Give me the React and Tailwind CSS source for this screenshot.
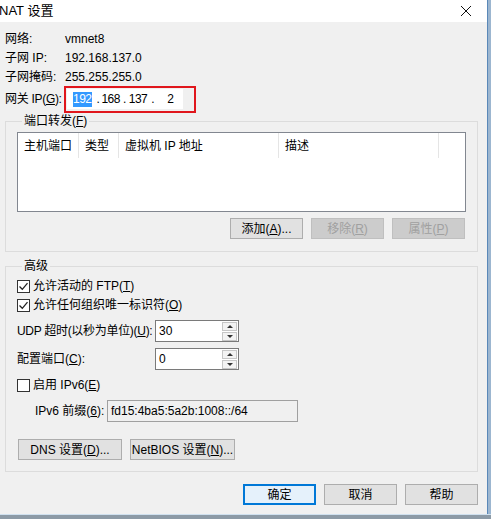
import React from 'react'

const font = { fontFamily: '"Liberation Sans", "Noto Sans CJK SC", sans-serif' }

const btn = 'flex h-[21px] w-[73px] items-center justify-center whitespace-nowrap border text-[12px]'
const btnOn = `${btn} border-[#adadad] bg-[#e1e1e1] text-black`
const btnOff = `${btn} border-[#bfbfbf] bg-[#cccccc] text-[#a0a0a0]`

function U({ children }) {
  return <span className="underline underline-offset-1">{children}</span>
}

function Check({ checked, children }) {
  return (
    <div className="flex h-4 items-center whitespace-nowrap">
      <span className="flex h-[13px] w-[13px] items-center justify-center border border-[#333] bg-white">
        {checked && (
          <svg width="11" height="11" viewBox="0 0 11 11">
            <path d="M1.5 5.5 L4.3 8.3 L9.5 2.2" fill="none" stroke="#222" strokeWidth="1.3" />
          </svg>
        )}
      </span>
      <span className="ml-[3px]">{children}</span>
    </div>
  )
}

function Spinner({ value }) {
  return (
    <div className="flex h-[22px] w-[84px] shrink-0 border border-[#7a7a7a] bg-white">
      <span className="flex-1 pl-[3px] leading-[20px]">{value}</span>
      <div className="flex w-[17px] flex-col gap-[1px] p-[1px]">
        {['M1 5 L4 2 L7 5 Z', 'M1 2 L4 5 L7 2 Z'].map((d) => (
          <span key={d} className="flex flex-1 items-center justify-center border border-[#c6c6c6] bg-[#f3f3f3]">
            <svg width="8" height="7" viewBox="0 0 8 7">
              <path d={d} fill="#333" />
            </svg>
          </span>
        ))}
      </div>
    </div>
  )
}

function Field({ label, value }) {
  return (
    <div className="flex h-[19px] items-center whitespace-nowrap">
      <span className="w-[60px] shrink-0">{label}</span>
      <span>{value}</span>
    </div>
  )
}

export default function App() {
  return (
    <div className="flex h-[519px] w-[491px] flex-col bg-[#8c9aa6] text-[12px] text-black" style={font}>
      <div className="flex flex-1">
        <div className="flex w-[487px] flex-col bg-[#f0f0f0]">
          {/* title bar */}
          <div className="flex h-[22px] shrink-0 items-center justify-between bg-white">
            <span className="-ml-[1px] text-[13px]">NAT 设置</span>
            <svg className="mr-[15px]" width="12" height="12" viewBox="0 0 12 12">
              <path d="M1 1 L11 11 M11 1 L1 11" stroke="#111" strokeWidth="1" />
            </svg>
          </div>

          <div className="flex flex-col pl-[5px] pt-[7px]">
            <Field label="网络:" value="vmnet8" />
            <Field label="子网 IP:" value="192.168.137.0" />
            <Field label="子网掩码:" value="255.255.255.0" />
            <div className="flex h-[26px] items-center whitespace-nowrap">
              <span className="w-[59px] shrink-0 tracking-[-0.3px]">
                网关 IP(<U>G</U>):
              </span>
              <div className="flex h-[27px] w-[132px] shrink-0 items-center border-2 border-[#e0161c] pl-[1px]">
                <div className="flex h-[20px] w-[116px] items-center bg-white pl-[6px] tracking-[-0.5px]">
                  <span className="bg-[#3399ff] leading-[15px] text-white">192</span>
                  <span className="ml-[5px]">.</span>
                  <span className="ml-[2px]">168</span>
                  <span className="ml-[3px]">.</span>
                  <span className="ml-[3px]">137</span>
                  <span className="ml-[4px]">.</span>
                  <span className="ml-[13px]">2</span>
                </div>
              </div>
            </div>
          </div>

          {/* port forwarding */}
          <fieldset className="mx-[5px] mr-[9px] mt-[2px] border border-[#dcdcdc] pb-[12px] pl-[11px] pr-[11px]">
            <legend className="ml-[5px] px-[2px] leading-[14px]">
              端口转发(<U>F</U>)
            </legend>
            <div className="mt-[4px] h-[80px] border border-[#828790] bg-white">
              <div className="flex h-[25px] items-center">
                {[
                  ['主机端口', 'w-[61px]'],
                  ['类型', 'w-[40px]'],
                  ['虚拟机 IP 地址', 'w-[160px]'],
                  ['描述', 'w-[160px]'],
                ].map(([t, w]) => (
                  <div key={t} className={`${w} flex h-full items-center whitespace-nowrap border-r border-[#e5e5e5] pl-[6px]`}>
                    {t}
                  </div>
                ))}
              </div>
            </div>
            <div className="mt-[6px] flex justify-end gap-[8px] pr-px">
              <div className={btnOn}>
                添加(<U>A</U>)...
              </div>
              <div className={btnOff}>
                移除(<U>R</U>)
              </div>
              <div className={btnOff}>
                属性(<U>P</U>)
              </div>
            </div>
          </fieldset>

          {/* advanced */}
          <fieldset className="mx-[5px] mr-[9px] mt-[7px] border border-[#dcdcdc] pb-[11px] pl-[11px]">
            <legend className="ml-[5px] px-[2px] leading-[14px]">高级</legend>
            <div className="mt-[5px]">
              <Check checked>
                允许活动的 FTP(<U>T</U>)
              </Check>
            </div>
            <div className="mt-[3px]">
              <Check checked>
                允许任何组织唯一标识符(<U>O</U>)
              </Check>
            </div>
            <div className="mt-[7px] flex items-center whitespace-nowrap">
              <span className="w-[138px] shrink-0 tracking-[-0.3px]">
                UDP 超时(以秒为单位)(<U>U</U>):
              </span>
              <Spinner value="30" />
            </div>
            <div className="mt-[6px] flex items-center whitespace-nowrap">
              <span className="w-[138px] shrink-0">
                配置端口(<U>C</U>):
              </span>
              <Spinner value="0" />
            </div>
            <div className="mt-[7px]">
              <Check>
                启用 IPv6(<U>E</U>)
              </Check>
            </div>
            <div className="mt-[7px] flex items-center whitespace-nowrap pl-[18px]">
              <span className="w-[72px] shrink-0">
                IPv6 前缀(<U>6</U>):
              </span>
              <div className="h-[22px] w-[191px] shrink-0 border border-[#a0a0a0] bg-[#f0f0f0] pl-[3px] leading-[20px]">
                fd15:4ba5:5a2b:1008::/64
              </div>
            </div>
            <div className="mt-[17px] flex gap-[8px] pl-px">
              <div className={`${btnOn} w-[104px]`}>
                DNS 设置(<U>D</U>)...
              </div>
              <div className={`${btnOn} w-[105px]`}>
                NetBIOS 设置(<U>N</U>)...
              </div>
            </div>
          </fieldset>

          {/* dialog buttons */}
          <div className="mt-[12px] flex justify-end gap-[8px] pr-[9px]">
            <div className={`${btn} border-2 border-[#0078d7] bg-[#e5f1fb]`}>确定</div>
            <div className={btnOn}>取消</div>
            <div className={btnOn}>帮助</div>
          </div>
          <div className="flex-1" />
        </div>
        <div className="w-[4px] border-l border-[#5a88b8] bg-[#9cb6d0]" />
      </div>
      <div className="h-px bg-[#cfe0ee]" />
      <div className="h-[4px] bg-[#8c9aa6]" />
    </div>
  )
}
